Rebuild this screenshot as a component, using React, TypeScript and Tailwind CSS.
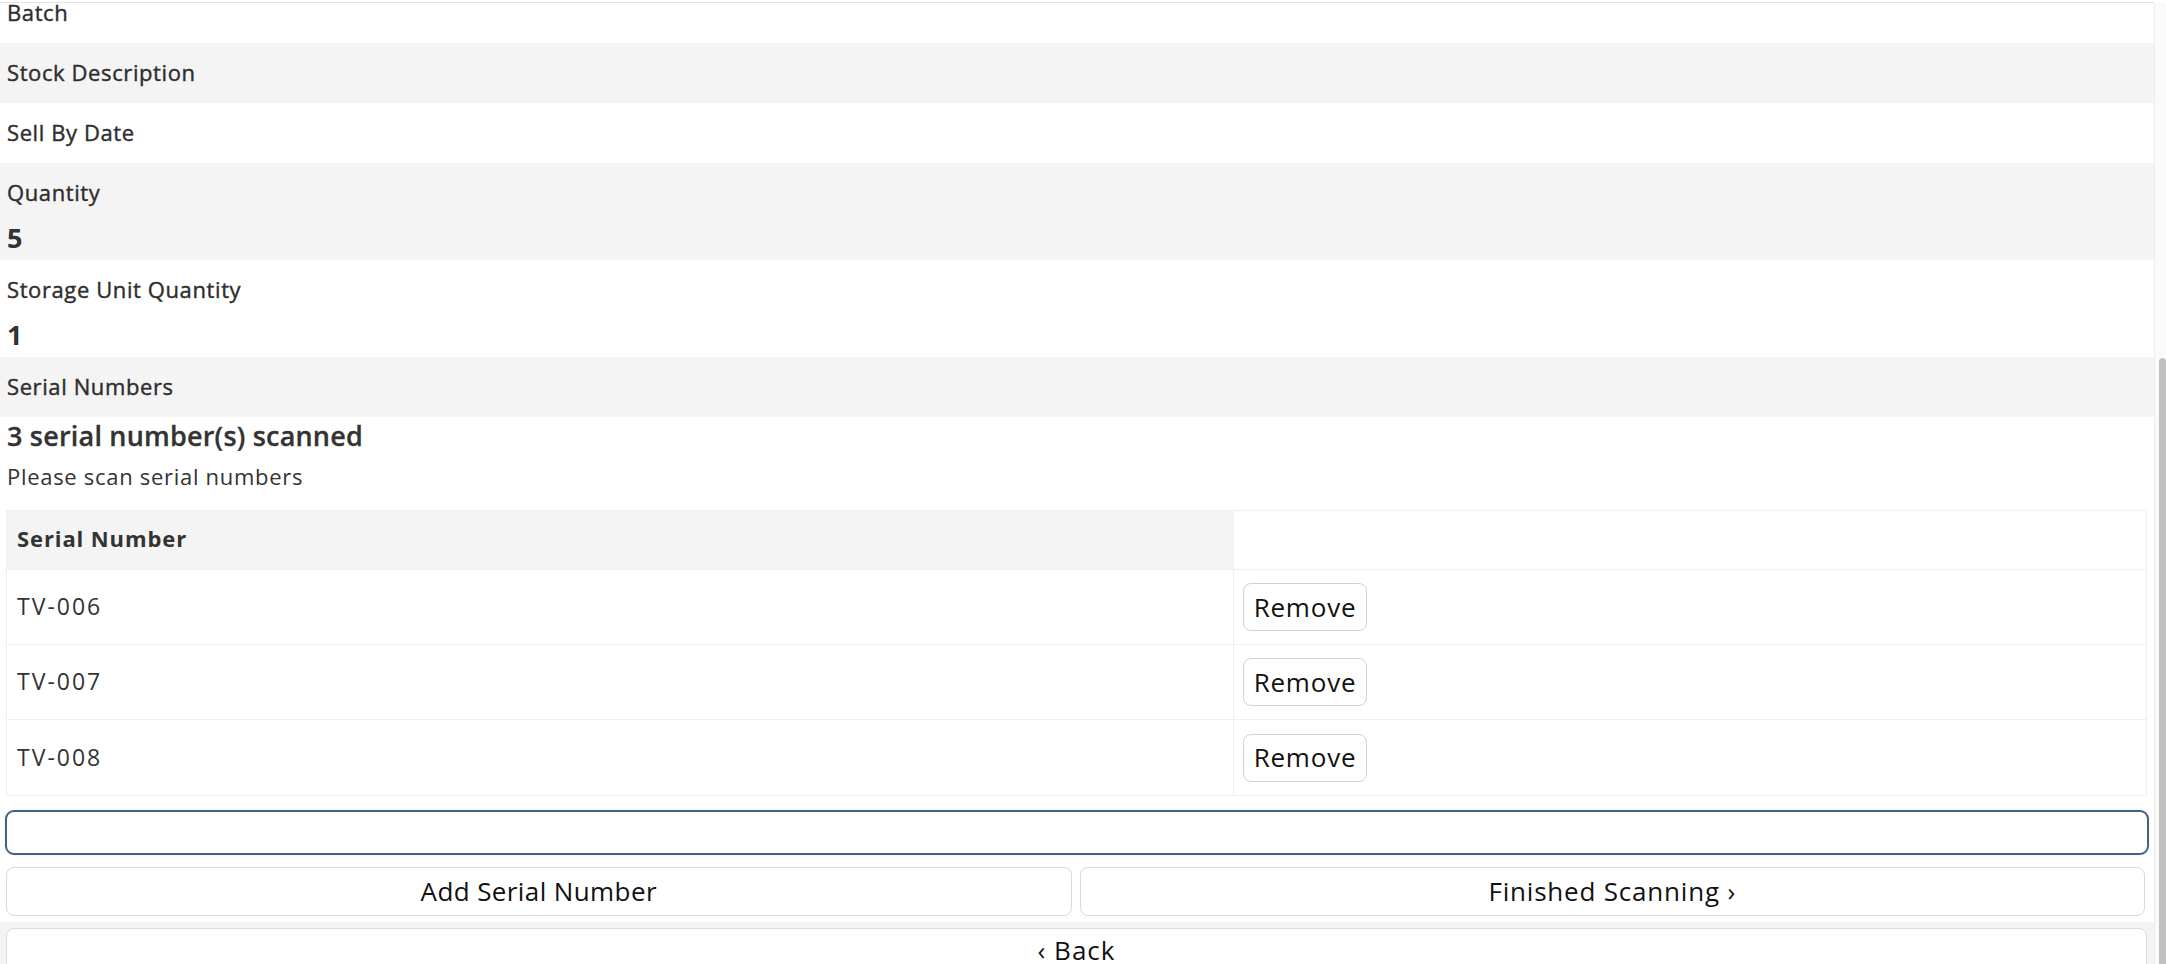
import React from "react";

function FieldRow({ label, value, gray }: { label: string; value?: string; gray?: boolean }) {
  return (
    <div
      className={`${gray ? "bg-[#f4f4f4]" : "bg-white"} ${value ? "h-[97px]" : "h-[60px]"} shrink-0 pt-[14px] pl-[7px] flex flex-col`}
    >
      <div className="h-[30px] leading-[30px] text-[22px] tracking-[0.6px] font-medium text-[#2e2e2e] [-webkit-text-stroke:0.4px_#2e2e2e]">
        {label}
      </div>
      {value && (
        <div className="mt-[11px] h-[40px] leading-[40px] text-[27px] font-bold text-[#333]">{value}</div>
      )}
    </div>
  );
}

function SerialRow({ sn, last }: { sn: string; last?: boolean }) {
  return (
    <div className={`grid grid-cols-[1227px_1fr] h-[75px] shrink-0 ${last ? "" : "border-b border-[#efefef]"}`}>
      <div className="flex items-center pl-[10px] pb-[2px] text-[23px] tracking-[2px] leading-[30px] text-[#333] border-r border-[#efefef]">
        {sn}
      </div>
      <div className="flex items-center pl-[9px]">
        <button className="w-[124px] h-[48px] flex items-center justify-center bg-white border border-[#d2d2d2] rounded-[8px] text-[26px] tracking-[0.8px] text-[#111]">
          Remove
        </button>
      </div>
    </div>
  );
}

export default function App() {
  return (
    <div className="w-[2166px] h-[964px] overflow-hidden flex bg-white font-['Open_Sans','Noto_Sans',sans-serif] text-[#333]">
      <main className="flex-1 min-w-0 h-[964px] overflow-hidden">
        <div className="h-[2px]" />
        <div className="h-[1px] bg-[#e3e3e3]" />
        <div className="h-[40px] flex items-end pb-[16px] pl-[7px] overflow-hidden bg-white">
          <div className="h-[30px] leading-[30px] text-[22px] tracking-[0.6px] font-medium text-[#2e2e2e] [-webkit-text-stroke:0.4px_#2e2e2e]">
            Batch
          </div>
        </div>
        <FieldRow label="Stock Description" gray />
        <FieldRow label="Sell By Date" />
        <FieldRow label="Quantity" value="5" gray />
        <FieldRow label="Storage Unit Quantity" value="1" />
        <FieldRow label="Serial Numbers" gray />

        <div className="bg-white">
          <div className="pl-[7px] h-[38px] leading-[38px] text-[27px] tracking-[0.2px] font-semibold text-[#333] [-webkit-text-stroke:0.3px_#333]">
            3 serial number(s) scanned
          </div>
          <div className="pl-[7px] mt-[6px] h-[30px] leading-[30px] text-[22px] tracking-[0.7px] text-[#333]">
            Please scan serial numbers
          </div>

          <div className="mt-[19px] ml-[6px] mr-[7px] border border-[#efefef]">
            <div className="grid grid-cols-[1227px_1fr] h-[59px] border-b border-[#efefef]">
              <div className="bg-[#f4f4f4] flex items-center pl-[10px] pb-[4px] text-[22px] tracking-[0.9px] font-bold text-[#333]">
                Serial Number
              </div>
              <div className="bg-white" />
            </div>
            <SerialRow sn="TV-006" />
            <SerialRow sn="TV-007" />
            <SerialRow sn="TV-008" last />
          </div>

          <div className="mt-[14px] ml-[5px] mr-[5px] h-[45px] border-2 border-[#46607f] rounded-[9px] bg-white shadow-[0_0_3px_#d6f0f0]" />

          <div className="mt-[12px] ml-[6px] mr-[9px] grid grid-cols-2 gap-[8px]">
            <button className="h-[49px] bg-white border border-[#d9d9d9] rounded-[8px] text-[26px] tracking-[0.4px] text-[#111]">
              Add Serial Number
            </button>
            <button className="h-[49px] bg-white border border-[#d9d9d9] rounded-[8px] text-[26px] tracking-[0.8px] text-[#111]">
              Finished Scanning ›
            </button>
          </div>
        </div>

        <div className="mt-[6px] h-[120px] bg-[#f3f3f3] pt-[6px] pl-[6px] pr-[7px]">
          <button className="w-full h-[48px] bg-white border border-[#dcdcdc] rounded-[8px] text-[26px] tracking-[1px] text-[#111] leading-[30px] flex items-start justify-center pt-[6px]">
            ‹ Back
          </button>
        </div>
      </main>

      <div className="w-[12px] flex flex-col">
        <div className="h-[3px]" />
        <div className="flex-1 flex bg-[#fafafa] border-l border-[#ececec] pl-[4px] pt-[355px]">
          <div className="w-[7px] bg-[#c1c1c1] rounded-t-[4px]" />
        </div>
      </div>
    </div>
  );
}
